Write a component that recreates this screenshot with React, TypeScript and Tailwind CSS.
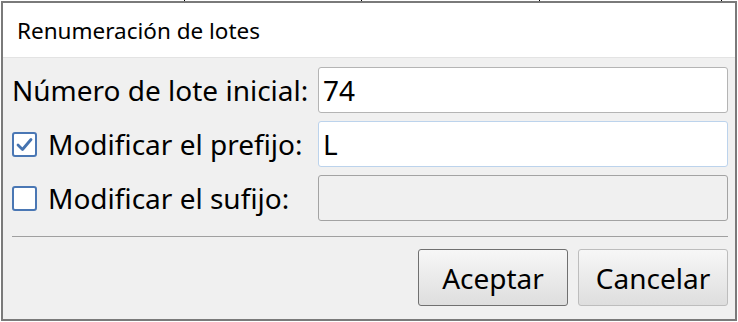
import React from "react";

const font = { fontFamily: '"Noto Sans", "Open Sans", sans-serif' };

function CheckBox({ checked }: { checked: boolean }) {
  return (
    <span className="flex h-[25px] w-[25px] shrink-0 items-center justify-center rounded-[3px] border-2 border-[#4a77b4] bg-white">
      {checked && (
        <svg width="19" height="19" viewBox="0 0 19 19" fill="none">
          <path d="M3 10 L7.5 14.5 L16 4.5" stroke="#4573b0" strokeWidth="2.8" strokeLinecap="round" strokeLinejoin="round" />
        </svg>
      )}
    </span>
  );
}

export default function App() {
  return (
    <div className="relative h-[322px] w-[738px] overflow-hidden bg-white text-black" style={font}>
      {/* bits of the table behind the dialog */}
      <div className="flex h-px">
        <div className="w-[185px] border-r border-black" />
        <div className="w-[177px] border-r border-black" />
        <div className="w-[178px] border-r border-black" />
        <div className="w-[182px] border-r border-black" />
      </div>
      <div className="ml-px flex h-[320px] w-[736px] flex-col border-2 border-[#7a7a7a]">
        <div className="flex h-[55px] items-center border-b border-[#e3e3e3] bg-white pl-[14px] pt-[2px] text-[22.5px] leading-none">
          Renumeración de lotes
        </div>
        <div className="flex flex-1 flex-col bg-[#f0f0f0] pl-[9px] pr-[7px] pt-[9px]">
          <div className="grid grid-cols-[306px_1fr] gap-y-[8px] text-[28px] leading-none">
            <div className="flex h-[46px] items-center whitespace-nowrap">Número de lote inicial:</div>
            <div className="flex h-[46px] items-center rounded-[3px] border border-[#b4b4b4] bg-white pl-[4px]">74</div>

            <div className="flex h-[46px] items-center gap-[11px] whitespace-nowrap">
              <CheckBox checked />
              <span>Modificar el prefijo:</span>
            </div>
            <div className="flex h-[46px] items-center rounded-[3px] border border-[#bcd3ec] bg-white pl-[4px]">L</div>

            <div className="flex h-[46px] items-center gap-[11px] whitespace-nowrap">
              <CheckBox checked={false} />
              <span>Modificar el sufijo:</span>
            </div>
            <div className="h-[46px] rounded-[3px] border border-[#a3a3a3] bg-[#f0f0f0]" />
          </div>
          <div className="mt-[15px] h-px bg-[#a0a0a0]" />
          <div className="mt-[12px] flex justify-end gap-[10px]">
            <button className="h-[57px] w-[150px] rounded-[3px] border border-[#707070] bg-gradient-to-b from-[#f7f7f7] to-[#dedede] text-[28px] leading-none">
              Aceptar
            </button>
            <button className="h-[57px] w-[150px] rounded-[3px] border border-[#bdbdbd] bg-gradient-to-b from-[#f7f7f7] to-[#dedede] text-[28px] leading-none">
              Cancelar
            </button>
          </div>
        </div>
      </div>
    </div>
  );
}
